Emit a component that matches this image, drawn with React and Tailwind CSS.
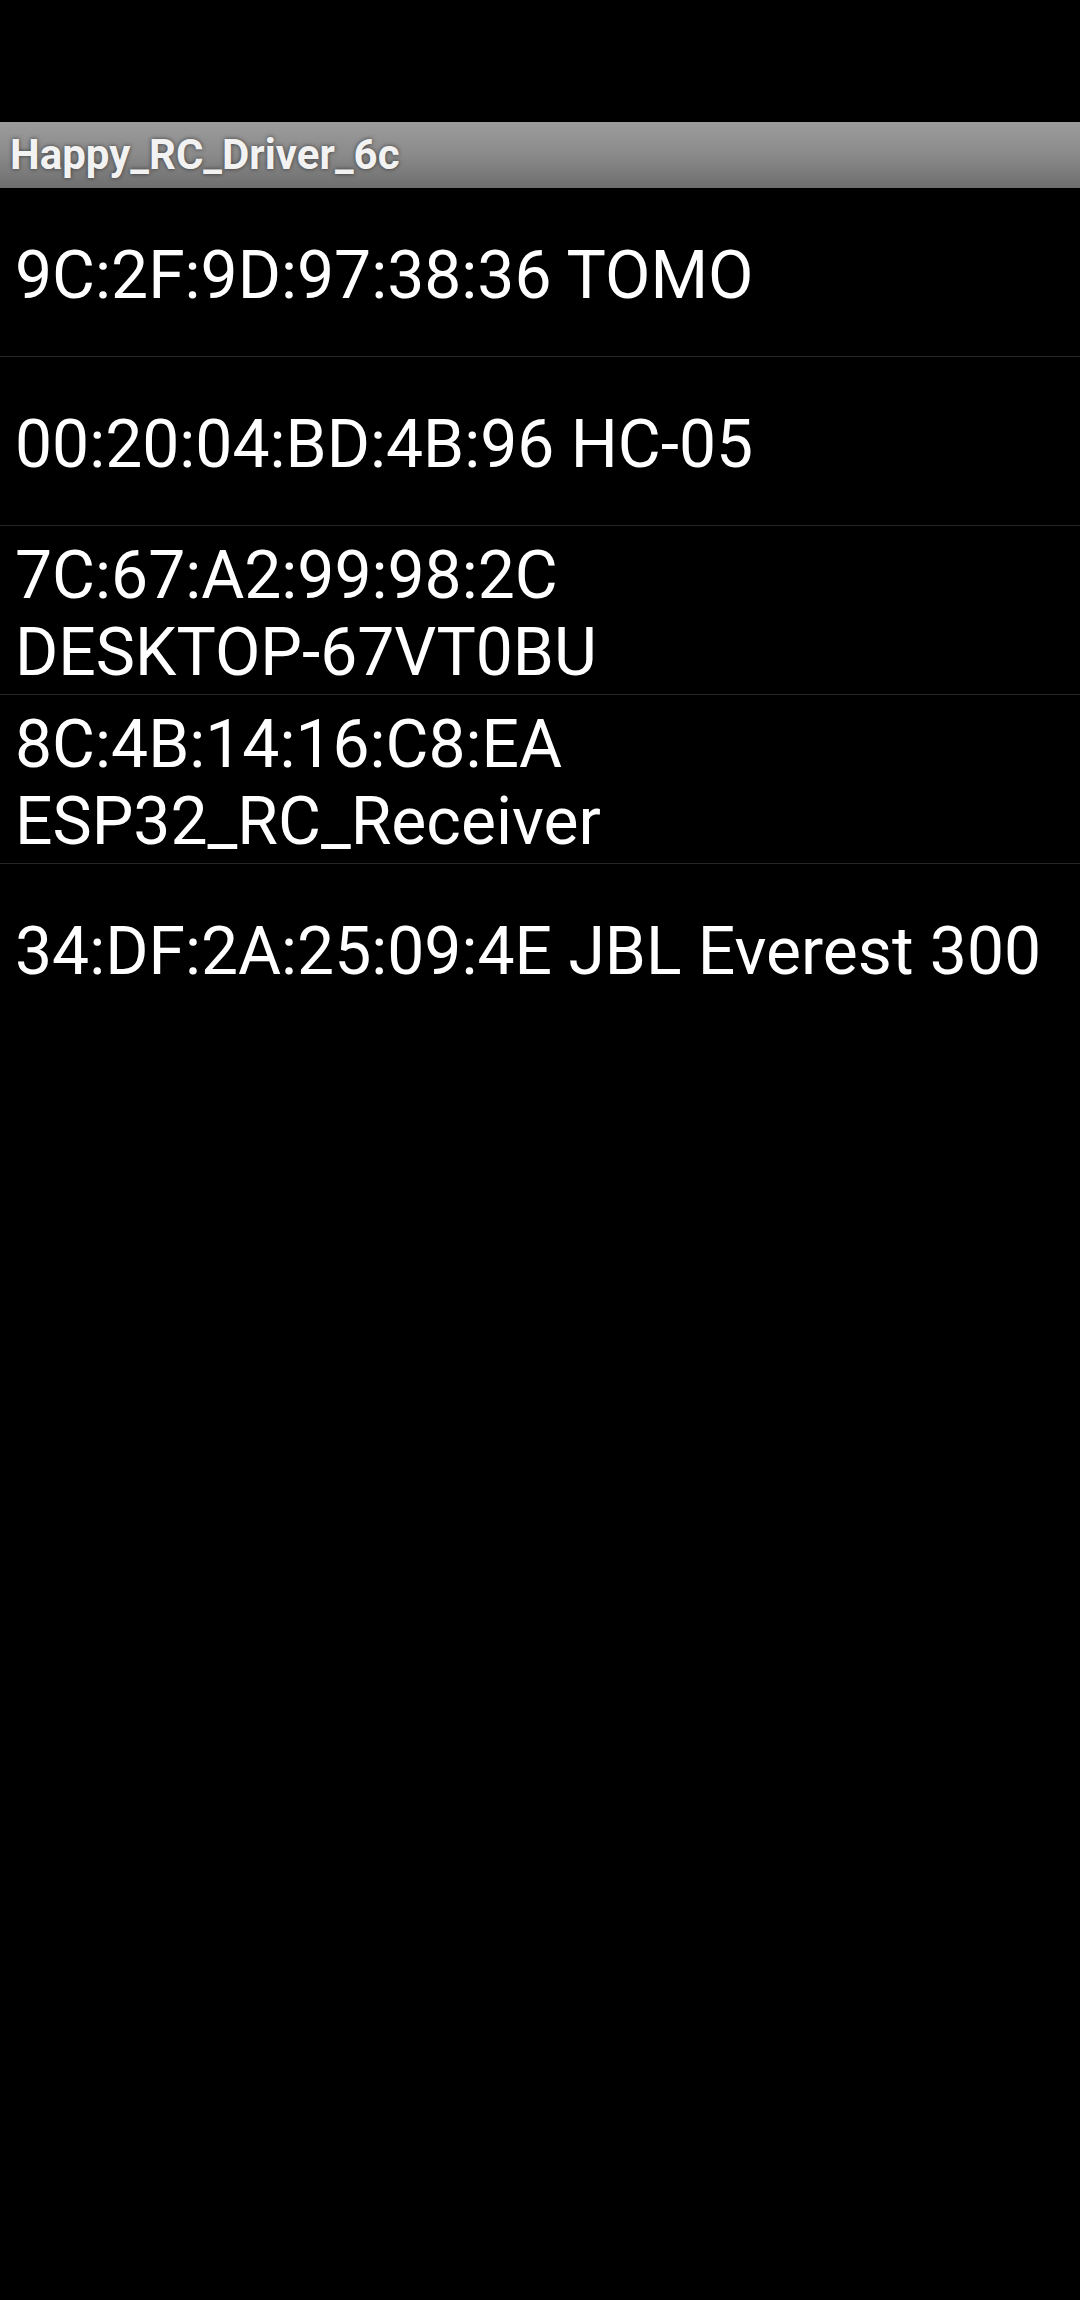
import React from 'react';

const devices = [
    { mac: '9C:2F:9D:97:38:36', name: 'TOMO' },
    { mac: '00:20:04:BD:4B:96', name: 'HC-05' },
    { mac: '7C:67:A2:99:98:2C', name: 'DESKTOP-67VT0BU' },
    { mac: '8C:4B:14:16:C8:EA', name: 'ESP32_RC_Receiver' },
    { mac: '34:DF:2A:25:09:4E', name: 'JBL Everest 300' },
];

const App = () => {
    return (
        <div className="min-h-[2300px] w-[1080px] bg-black font-['Roboto',sans-serif]">
            <div className="h-[122px]" />

            <div className="h-[66px] flex items-center pl-[10px] bg-gradient-to-b from-[#9c9c9c] via-[#8a8a8a] to-[#6e6e6e]">
                <span className="text-[42px] font-bold text-[#f2f2f2] leading-none [text-shadow:0_0_4px_rgba(0,0,0,0.6)]">
                    Happy_RC_Driver_6c
                </span>
            </div>

            <ul>
                {devices.map((d, i) => (
                    <li
                        key={d.mac}
                        className={
                            i < devices.length - 1
                                ? 'h-[169px] flex items-center px-[15px] pt-[8px] border-b border-[#262626]'
                                : 'h-[168px] flex items-center px-[15px] pt-[8px]'
                        }
                    >
                        <span className="text-[66px] leading-[1.172] text-white">
                            {d.mac} <span className="whitespace-nowrap">{d.name}</span>
                        </span>
                    </li>
                ))}
            </ul>
        </div>
    );
};

export default App;
